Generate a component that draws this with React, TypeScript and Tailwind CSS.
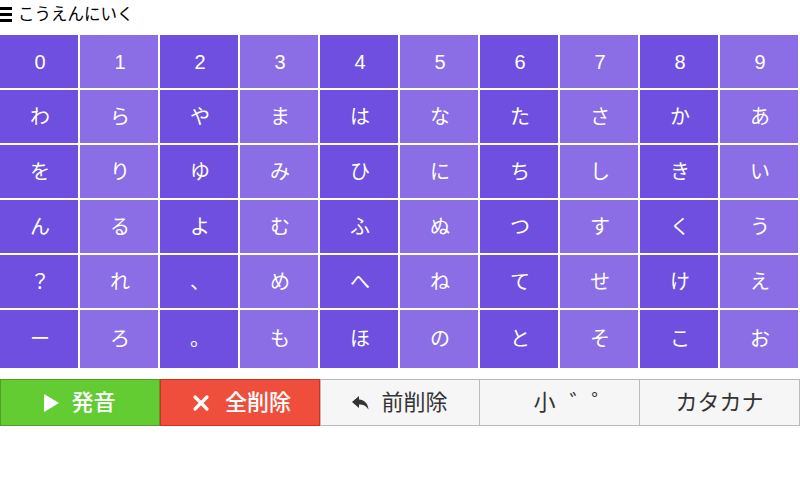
import { X } from 'lucide-react'

const rows = [
  ['0', '1', '2', '3', '4', '5', '6', '7', '8', '9'],
  ['わ', 'ら', 'や', 'ま', 'は', 'な', 'た', 'さ', 'か', 'あ'],
  ['を', 'り', 'ゆ', 'み', 'ひ', 'に', 'ち', 'し', 'き', 'い'],
  ['ん', 'る', 'よ', 'む', 'ふ', 'ぬ', 'つ', 'す', 'く', 'う'],
  ['？', 'れ', '、', 'め', 'へ', 'ね', 'て', 'せ', 'け', 'え'],
  ['ー', 'ろ', '。', 'も', 'ほ', 'の', 'と', 'そ', 'こ', 'お'],
]

const font = { fontFamily: '"Liberation Sans", "Noto Sans CJK JP", sans-serif' }

export default function App() {
  return (
    <div className="w-[800px] h-[480px] bg-white" style={font}>
      {/* Title */}
      <div className="flex items-center h-[35px] pb-[6px] gap-[6px]">
        <div className="flex flex-col gap-[3px] w-[12px]">
          <span className="h-[3px] bg-black" />
          <span className="h-[3px] bg-black" />
          <span className="h-[3px] bg-black" />
        </div>
        <span className="text-[16.5px] text-black leading-none">こうえんにいく</span>
      </div>

      {/* Keys */}
      <div className="grid grid-cols-[repeat(10,78px)] grid-rows-[53px_53px_53px_53px_53px_58px] gap-[2px] w-[798px]">
        {rows.map((row, r) =>
          row.map((ch, c) => (
            <div
              key={`${r}-${c}`}
              className={`flex items-center justify-center pl-[2px] text-white text-[20px] ${c % 2 === 0 ? 'bg-[#6f4fe0]' : 'bg-[#8b6de6]'}`}
            >
              {ch}
            </div>
          ))
        )}
      </div>

      {/* Actions */}
      <div className="flex mt-[11px] h-[47px] w-[800px] text-[22px]">
        <button className="w-[160px] flex items-center justify-center gap-[12px] bg-[#63cc33] border border-[#4f9e2c] text-white font-medium">
          <svg width="15" height="18" viewBox="0 0 15 18"><path d="M0 0 L15 9 L0 18 Z" fill="white" /></svg>
          発音
        </button>
        <button className="w-[160px] flex items-center justify-center gap-[12px] bg-[#f04e3c] border border-[#d2311f] text-white font-medium">
          <X size={24} strokeWidth={3.2} />
          全削除
        </button>
        <button className="w-[160px] flex items-center justify-center gap-[12px] bg-[#f6f6f6] border border-[#bbbbbb] text-[#333]">
          <svg width="17" height="14" viewBox="0 0 17 14">
            <path d="M7 0 L0 6 L7 12 L7 8.5 C11 8.5 14 9.5 16.5 13.5 C16 8 13 4 7 3.5 Z" fill="#333" />
          </svg>
          前削除
        </button>
        <button className="w-[160px] flex items-center justify-center gap-[14px] pl-[28px] bg-[#f6f6f6] border border-l-0 border-[#bbbbbb] text-[#333]">
          <span>小</span>
          <span>゛゜</span>
        </button>
        <button className="w-[160px] flex items-center justify-center bg-[#f6f6f6] border border-l-0 border-[#bbbbbb] text-[#333]">
          カタカナ
        </button>
      </div>
    </div>
  )
}
